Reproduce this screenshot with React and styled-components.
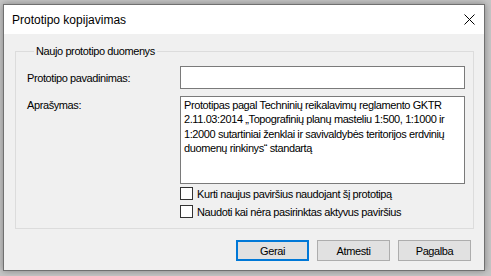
import React from "react";
import styled, { createGlobalStyle } from "styled-components";

const Global = createGlobalStyle`
  html, body {
    margin: 0;
    padding: 0;
    background-color: #c6c6c6;
    width: 491px;
    height: 276px;
    overflow: hidden;
  }
  #root {
    padding: 4px 0 0 3px;
  }
`;

const Window = styled.div`
  width: 480px;
  height: 265px;
  border: 1px solid #707070;
  background-color: #f0f0f0;
  box-shadow: 0 0 7px rgba(0,0,0,0.35);
  display: flex;
  flex-direction: column;
  font-family: "Liberation Sans", Arial, sans-serif;
  font-size: 11px;
  letter-spacing: -0.4px;
  color: #000;
`;

const TitleBar = styled.div`
  height: 29px;
  background-color: #fff;
  display: flex;
  align-items: center;
  justify-content: space-between;
  padding: 0 9px 0 8px;
  font-size: 12px;
  letter-spacing: 0;
`;

const Close = styled.svg`
  width: 11px;
  height: 11px;
  margin-top: -1px;
`;

const Body = styled.div`
  flex: 1;
  padding: 11px 10px 0 11px;
  display: flex;
  flex-direction: column;
`;

const Group = styled.fieldset`
  margin: 0;
  padding: 8px 8px 10px 11px;
  border: 1px solid #dcdcdc;
  min-width: 0;
`;

const Legend = styled.legend`
  margin-left: 7px;
  padding: 0 2px;
  line-height: 13px;
`;

const Form = styled.div`
  display: grid;
  grid-template-columns: 153px 285px;
  row-gap: 7px;
`;

const Label = styled.label`
  display: flex;
  align-items: ${(p) => (p.top ? "flex-start" : "center")};
  padding-top: ${(p) => (p.top ? "2px" : "0")};
  line-height: 14px;
`;

const TextBox = styled.input`
  box-sizing: border-box;
  height: 23px;
  width: 100%;
  margin: 0;
  border: 1px solid #7a7a7a;
  background: #fff;
  outline: none;
`;

const Memo = styled.textarea`
  box-sizing: border-box;
  height: 88px;
  width: 100%;
  margin: 0;
  padding: 1px 3px;
  border: 1px solid #7a7a7a;
  background: #fff;
  resize: none;
  overflow: hidden;
  white-space: pre;
  font-family: inherit;
  font-size: 11px;
  letter-spacing: -0.4px;
  line-height: 14.4px;
  color: #000;
  outline: none;
`;

const Checks = styled.div`
  grid-column: 2;
  display: flex;
  flex-direction: column;
  gap: 5px;
  margin-top: -4px;
`;

const CheckRow = styled.label`
  display: flex;
  align-items: center;
  gap: 4px;
  height: 13px;
`;

const Box = styled.span`
  box-sizing: border-box;
  width: 13px;
  height: 13px;
  border: 1px solid #333;
  background: #fff;
  flex: none;
`;

const Buttons = styled.div`
  display: flex;
  justify-content: flex-end;
  gap: 8px;
  padding: 11px 3px 0 0;
`;

const Button = styled.button`
  box-sizing: border-box;
  width: 73px;
  height: 21px;
  margin: 0;
  padding: 0;
  background-color: #e1e1e1;
  border: ${(p) => (p.primary ? "2px solid #0078d7" : "1px solid #adadad")};
  font-family: inherit;
  font-size: 11px;
  letter-spacing: -0.4px;
  color: #000;
`;

const description =
  "Prototipas pagal Techninių reikalavimų reglamento GKTR\n" +
  "2.11.03:2014 „Topografinių planų masteliu 1:500, 1:1000 ir\n" +
  "1:2000 sutartiniai ženklai ir savivaldybės teritorijos erdvinių\n" +
  "duomenų rinkinys“ standartą";

export default function App() {
  return (
    <>
      <Global />
      <Window>
        <TitleBar>
          <span>Prototipo kopijavimas</span>
          <Close viewBox="0 0 11 11">
            <path d="M0.5 0.5 L10.5 10.5 M10.5 0.5 L0.5 10.5" stroke="#000" strokeWidth="1" />
          </Close>
        </TitleBar>
        <Body>
          <Group>
            <Legend>Naujo prototipo duomenys</Legend>
            <Form>
              <Label>Prototipo pavadinimas:</Label>
              <TextBox type="text" />
              <Label top>Aprašymas:</Label>
              <Memo defaultValue={description} wrap="off" />
              <Checks>
                <CheckRow>
                  <Box />
                  Kurti naujus paviršius naudojant šį prototipą
                </CheckRow>
                <CheckRow>
                  <Box />
                  Naudoti kai nėra pasirinktas aktyvus paviršius
                </CheckRow>
              </Checks>
            </Form>
          </Group>
          <Buttons>
            <Button primary>Gerai</Button>
            <Button>Atmesti</Button>
            <Button>Pagalba</Button>
          </Buttons>
        </Body>
      </Window>
    </>
  );
}
